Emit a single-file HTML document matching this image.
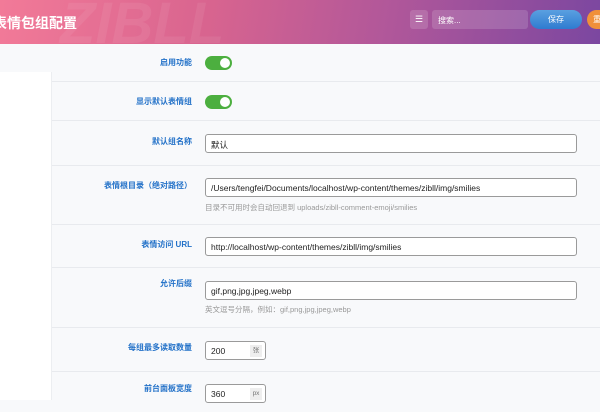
<!DOCTYPE html>
<html><head><meta charset="utf-8"><style>
*{margin:0;padding:0;box-sizing:border-box}
body{width:600px;height:400px;overflow:hidden;background:#f8f9fb;font-family:"Liberation Sans","Noto Sans CJK SC",sans-serif;position:relative}
.hd{position:absolute;left:0;top:0;width:600px;height:44px;background:linear-gradient(100deg,#f27a98 0%,#d8648f 35%,#b0579a 65%,#7b47a0 100%);overflow:hidden}
.ttl{position:absolute;left:-7px;top:13px;color:#fff;font-size:14px;font-weight:bold}
.wm{position:absolute;left:60px;top:-10px;color:rgba(255,255,255,.07);font-size:58px;font-weight:bold;font-style:italic}
.ib{position:absolute;left:410px;top:10px;width:18px;height:19px;background:rgba(255,255,255,.15);border-radius:3px;color:#fff;font-size:9px;text-align:center;line-height:19px}
.sr{position:absolute;left:432px;top:10px;width:96px;height:19px;background:rgba(255,255,255,.15);border-radius:3px;color:#fff;font-size:8px;padding:5px 0 0 6px}
.sv{position:absolute;left:530px;top:10px;width:52px;height:19px;border-radius:10px;background:linear-gradient(#5aa0e0,#2f7bd0);color:#fff;font-size:8px;text-align:center;line-height:19px}
.rs{position:absolute;left:587px;top:10px;width:40px;height:19px;border-radius:10px;background:#f0903a;color:#fff;font-size:8px;line-height:19px;padding-left:6px}
.sb{position:absolute;left:0;top:72px;width:52px;height:328px;background:#fff;border-right:1px solid #eceef1}
.row{position:absolute;left:52px;width:548px;border-bottom:1px solid #e8eaee}
.lb{position:absolute;right:408px;color:#2271c8;font-size:8px;font-weight:bold;text-align:right;white-space:nowrap}
.tg{position:absolute;left:153px;width:27px;height:14px;border-radius:7px;background:#4caf3f}
.tg:after{content:"";position:absolute;right:2px;top:2px;width:10px;height:10px;border-radius:50%;background:#fff}
.in{position:absolute;left:153px;width:372px;height:19px;border:1px solid #9a9a9a;border-radius:3px;background:#fff;font-size:8.5px;color:#222;padding:4px 0 0 5px;white-space:nowrap}
.sm{width:61px}
.un{position:absolute;right:3px;top:3px;width:12px;height:12px;background:#eee;color:#777;font-size:6.5px;text-align:center;line-height:12px}
.hp{position:absolute;left:153px;color:#999;font-size:7.5px;white-space:nowrap}
</style></head><body>
<div class="hd"><div class="wm">ZIBLL</div><div class="ttl">表情包组配置</div>
<div class="ib">☰</div><div class="sr">搜索...</div><div class="sv">保存</div><div class="rs">重置</div></div>
<div class="sb"></div>
<div class="row" style="top:44px;height:38px"><div class="lb" style="top:13px">启用功能</div><div class="tg" style="top:12px"></div></div>
<div class="row" style="top:82px;height:39px"><div class="lb" style="top:14px">显示默认表情组</div><div class="tg" style="top:13px"></div></div>
<div class="row" style="top:121px;height:45px"><div class="lb" style="top:15px">默认组名称</div><div class="in" style="top:13px">默认</div></div>
<div class="row" style="top:166px;height:59px"><div class="lb" style="top:14px">表情根目录（绝对路径）</div><div class="in" style="top:12px">/Users/tengfei/Documents/localhost/wp-content/themes/zibll/img/smilies</div><div class="hp" style="top:36px">目录不可用时会自动回退到 uploads/zibll-comment-emoji/smilies</div></div>
<div class="row" style="top:225px;height:43px"><div class="lb" style="top:14px">表情访问 URL</div><div class="in" style="top:12px">http://localhost/wp-content/themes/zibll/img/smilies</div></div>
<div class="row" style="top:268px;height:60px"><div class="lb" style="top:10px">允许后缀</div><div class="in" style="top:13px">gif,png,jpg,jpeg,webp</div><div class="hp" style="top:36px">英文逗号分隔，例如：gif,png,jpg,jpeg,webp</div></div>
<div class="row" style="top:328px;height:44px"><div class="lb" style="top:14px">每组最多读取数量</div><div class="in sm" style="top:13px">200<span class="un">张</span></div></div>
<div class="row" style="top:372px;height:40px;border:none"><div class="lb" style="top:11px">前台面板宽度</div><div class="in sm" style="top:12px">360<span class="un">px</span></div></div>
</body></html>
